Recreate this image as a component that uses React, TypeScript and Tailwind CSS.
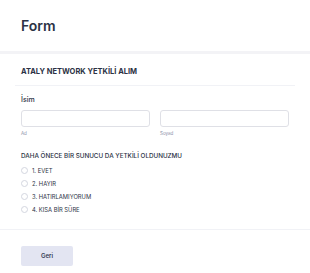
import React, { useState } from 'react';

const options = ['1. EVET', '2. HAYIR', '3. HATIRLAMIYORUM', '4. KISA BİR SÜRE'];

const App: React.FC = () => {
  const [selected, setSelected] = useState<string | null>(null);

  return (
    <div className="w-[310px] h-[273px] bg-white overflow-hidden font-['Inter','Liberation_Sans',sans-serif] text-[#2c3345]">
      <div className="h-[51px] flex items-center px-[21px]">
        <h1 className="text-[14px] font-semibold leading-none">Form</h1>
      </div>
      <div className="h-[3px] bg-[#f3f3f6]" />

      <div className="pt-[13px]">
        <h2 className="px-[21px] text-[7.5px] font-bold leading-[10px] uppercase">ATALY NETWORK YETKİLİ ALIM</h2>
        <div className="mx-[15px] mt-[8px] h-px bg-[#f1f2f6]" />

        <div className="px-[21px] pt-[9px]">
          <label className="block text-[7px] leading-[10px] font-medium">İsim</label>
          <div className="mt-[5px] grid grid-cols-2 gap-[10px]">
            <div>
              <input className="block w-full h-[17px] border border-[#dfe0e6] rounded-[3px] bg-white outline-none" />
              <span className="block mt-[4px] text-[4.5px] leading-[6px] text-[#8d8fa8]">Ad</span>
            </div>
            <div>
              <input className="block w-full h-[17px] border border-[#dfe0e6] rounded-[3px] bg-white outline-none" />
              <span className="block mt-[4px] text-[4.5px] leading-[6px] text-[#8d8fa8]">Soyad</span>
            </div>
          </div>

          <p className="mt-[15px] text-[6.3px] leading-[8px] font-medium uppercase">DAHA ÖNECE BİR SUNUCU DA YETKİLİ OLDUNUZMU</p>
          <div className="mt-[4px] flex flex-col">
            {options.map((opt) => (
              <button
                key={opt}
                type="button"
                onClick={() => setSelected(opt)}
                className="h-[13px] flex items-center gap-[4px] text-left"
              >
                <span className="w-[7px] h-[7px] rounded-full border border-[#d3d6df] bg-white flex items-center justify-center">
                  {selected === opt && <span className="w-[3px] h-[3px] rounded-full bg-[#2e69ff]" />}
                </span>
                <span className="text-[5.8px] leading-none text-[#2c3345]">{opt}</span>
              </button>
            ))}
          </div>
        </div>
      </div>

      <div className="mt-[13px] h-px bg-[#f1f2f6]" />
      <div className="px-[21px] pt-[10px]">
        <button type="button" className="w-[52px] h-[20px] rounded-[2px] bg-[#e3e5f2] text-[6px] font-semibold text-[#343c53]">
          Geri
        </button>
      </div>
    </div>
  );
};

export default App;
